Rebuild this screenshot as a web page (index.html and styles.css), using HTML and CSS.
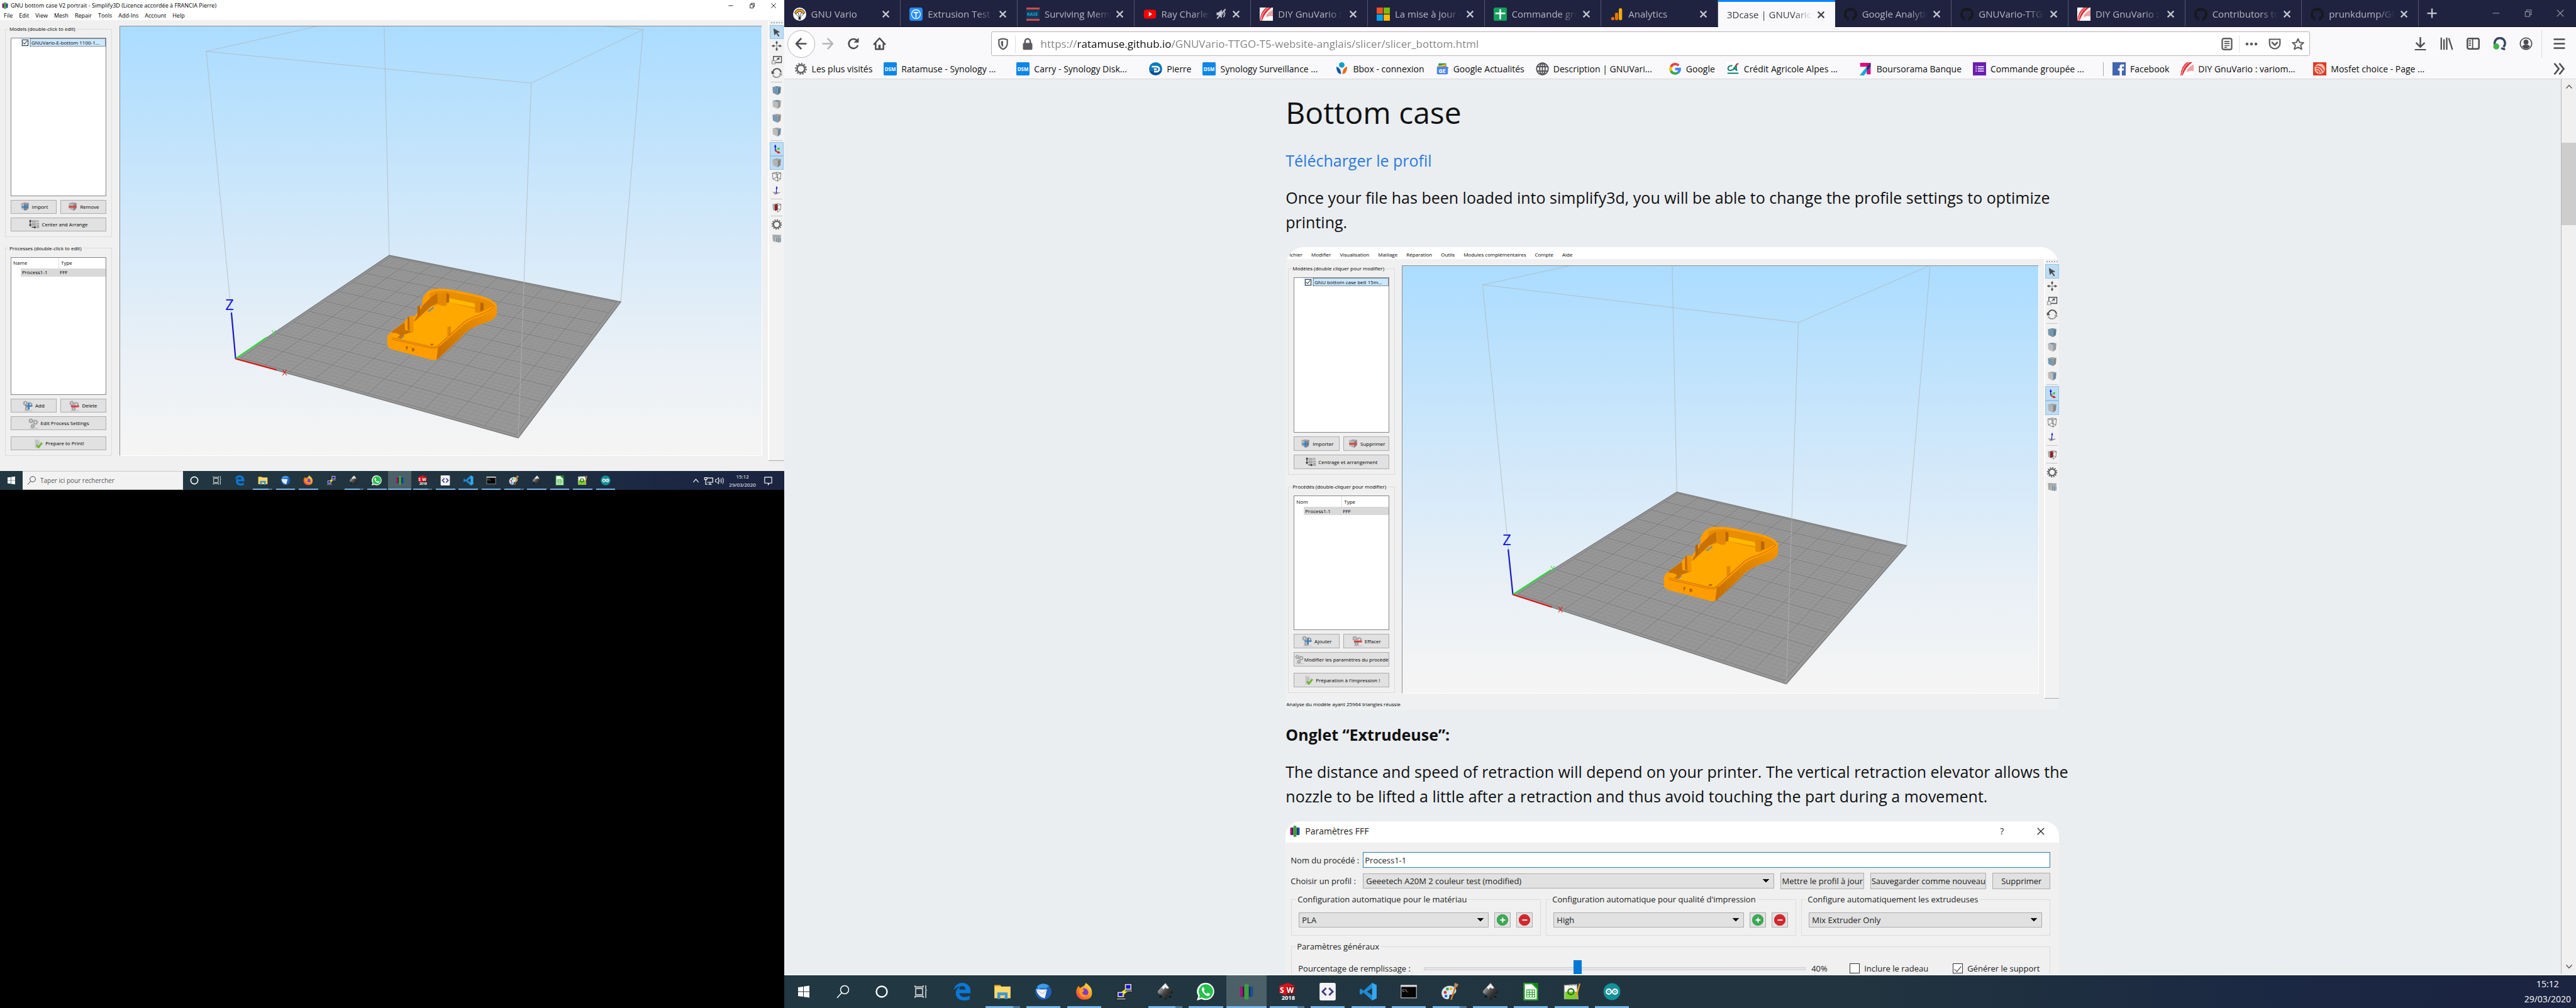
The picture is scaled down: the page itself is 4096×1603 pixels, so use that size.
FILE: index.html
```html
<!DOCTYPE html>
<html lang="fr">
<head>
<meta charset="utf-8">
<title>3Dcase | GNUVario</title>
<link rel="stylesheet" href="styles.css">
</head>
<body>
<svg class="sprite" aria-hidden="true">
  <defs>
    <linearGradient id="sky" x1="0" y1="0" x2="0" y2="1"><stop offset="0" stop-color="#aadcff"/><stop offset=".45" stop-color="#d1e8fa"/><stop offset=".75" stop-color="#e9f0f6"/><stop offset="1" stop-color="#f6f5f4"/></linearGradient>
    <linearGradient id="fire" x1="0" y1="1" x2=".8" y2="0"><stop offset="0" stop-color="#ff2f5a"/><stop offset=".5" stop-color="#ff8a16"/><stop offset="1" stop-color="#ffe14a"/></linearGradient>
    <linearGradient id="ink" x1="0" y1="0" x2="1" y2="1"><stop offset="0" stop-color="#f4f4f4"/><stop offset=".5" stop-color="#444"/><stop offset="1" stop-color="#000"/></linearGradient>
    <linearGradient id="wall" x1="0" y1="1" x2="1" y2="0"><stop offset="0" stop-color="#c46d00"/><stop offset=".6" stop-color="#e08600"/><stop offset="1" stop-color="#f79600"/></linearGradient>
    <g id="model">
      <path fill="#ff9d00" d="M-19 590Q-18 572 0 552L50 492 62 468Q75 448 88 462L103 430V395L112 391 120 397 122 350Q135 300 165 288 210 282 260 298L345 327Q410 352 420 390L419 445Q415 475 385 492 330 520 305 548 290 565 270 600L190 715Q178 735 160 730L0 665Q-19 652-19 640Z"/>
      <path fill="#ffa800" d="M22 575 60 540 145 400 185 385 225 372 330 410 345 438 380 420 290 490 182 638 165 645 30 600Z"/>
      <path fill="#e88e00" d="M150 318Q165 298 215 300L330 335Q405 362 410 392L360 430 330 410 225 372 185 385 150 400Z"/>
      <path fill="#ffb900" d="M228 345 330 378 334 404 228 372Z"/>
      <path fill="#c87100" d="M0 552 50 495 52 545 88 552 50 572 35 600 0 575ZM88 490 122 392 160 335 181 314 183 375 155 398 95 485Z"/>
      <path fill="#ffa200" d="M0 562Q25 560 32 580L20 590 0 584Z"/>
      <path fill="#8a8a8a" d="M142 425 166 398 168 408 146 434ZM36 590 48 574 48 584 40 598Z"/>
      <path fill="#e38800" d="M186 318 218 310V392L202 394 186 384ZM333 362H354V436H333ZM222 524 236 520V575L222 580Z"/>
      <path fill="#b96600" d="M218 312 229 322V370L218 376ZM354 372 367 376V418L354 430ZM102 395 112 391V450L102 458Z"/>
      <path fill="#ef9300" d="M62 465Q73 452 84 465L87 552Q72 560 62 540Z"/>
      <path fill="#c06b00" d="M62 465 69 460 71 550 62 540Z"/>
      <path fill="url(#wall)" d="M184 655 290 508Q310 482 345 466 405 428 420 394L419 445Q415 475 385 492 330 520 305 548 290 565 270 600L190 715Q186 726 178 729Z"/>
      <path fill="none" stroke="#c46e00" stroke-width="3" d="M0 592 160 650Q176 654 186 640L290 493Q310 470 345 454 402 420 412 392M0 602 158 658Q180 660 190 645"/>
      <path fill="#b56800" d="M55 648Q66 640 64 655L57 672ZM79 655Q93 655 90 674L80 678ZM153 630 168 630 164 640 155 640Z"/>
    </g>
  </defs>
  <symbol id="i-s3d" viewBox="0 0 24 24"><path fill="#a0187c" d="M3 6Q6 3 8 6V18Q6 21 3 18Z"/><path fill="#222" d="M7 5H9V19H7Z"/><path fill="#1c4c9c" d="M16 6Q19 3 21 6V18Q19 21 16 18Z"/><path fill="#18304a" d="M15 5H17V19H15Z"/><path fill="#3f9c45" d="M9 3Q12-1 15 3V21Q12 25 9 21Z"/></symbol>
  <symbol id="i-min" viewBox="0 0 24 24"><path d="M3 12H21" fill="none" stroke="currentColor" stroke-width="2"/></symbol>
  <symbol id="i-restore" viewBox="0 0 24 24"><path d="M4 8H16V21H4ZM8 8V3H20V16H16" fill="none" stroke="currentColor" stroke-width="2"/></symbol>
  <symbol id="i-x" viewBox="0 0 24 24"><path d="M3 3 21 21M21 3 3 21" fill="none" stroke="currentColor" stroke-width="2"/></symbol>
  <symbol id="i-close" viewBox="0 0 24 24"><path d="M3 3 21 21M21 3 3 21" fill="none" stroke="currentColor" stroke-width="4"/></symbol>
  <symbol id="i-plus" viewBox="0 0 24 24"><path d="M12 2V22M2 12H22" fill="none" stroke="currentColor" stroke-width="3"/></symbol>

  <symbol id="i-cube" viewBox="0 0 24 24"><path class="ct" d="M3 4.500 12 2.500 21 4 14 7Z"/><path class="cl" d="M3 4.500 14 7V21.500L4 17Z"/><path class="cr" d="M14 7 21 4 20 17 14 21.500Z"/></symbol>
  <symbol id="i-cubeplus" viewBox="0 0 24 24"><use href="#i-cube"/><path d="M12 6V20M5 13H20" stroke="#2f7cc0" stroke-width="3"/></symbol>
  <symbol id="i-cubeminus" viewBox="0 0 24 24"><use href="#i-cube"/><path d="M3 12.500H21" stroke="#e04040" stroke-width="4"/></symbol>
  <symbol id="i-arrange" viewBox="0 0 24 24"><path fill="#aaa" d="M6 3H16V8H6ZM17 3H22V7H17ZM6 9H16V16H6ZM17 9H23V13H17ZM17 14H23V21H17Z"/><path fill="none" stroke="#333" stroke-width="1.800" d="M3 4V15M1 6 3 3 5 6M1 13 3 16 5 13M6 19H14M12 17 15 19 12 21"/></symbol>
  <symbol id="i-gears" viewBox="0 0 24 24"><g fill="none" stroke="#9a9a9a"><circle cx="6" cy="6" r="3" stroke-width="2"/><circle cx="6" cy="6" r="4.500" stroke-width="2" stroke-dasharray="2 1.500"/><circle cx="16" cy="9" r="3.500" stroke-width="2"/><circle cx="16" cy="9" r="5" stroke-width="2" stroke-dasharray="2 1.900"/><circle cx="10" cy="18" r="2.500" stroke-width="2"/><circle cx="10" cy="18" r="4" stroke-width="2" stroke-dasharray="2 1.100"/></g><path fill="#bbb" d="M3 22H22V23.500H3Z"/></symbol>
  <symbol id="i-gearsplus" viewBox="0 0 24 24"><use href="#i-gears"/><path d="M14 5V20M6 12H22" stroke="#2f7cc0" stroke-width="3"/></symbol>
  <symbol id="i-gearsminus" viewBox="0 0 24 24"><use href="#i-gears"/><path d="M4 13H22" stroke="#dd3a40" stroke-width="4"/></symbol>
  <symbol id="i-doc" viewBox="0 0 24 24"><path fill="#d8d8d8" d="M4 2H14L18 7V22H4Z"/><path stroke="#999" fill="none" d="M6 5H12M6 8H15M6 11H15M6 14H13M6 17H11M6 20H15"/><path fill="none" stroke="#6cb52d" stroke-width="4" d="M9 15 13 20 21 10"/></symbol>

  <symbol id="t-arrow" viewBox="0 0 24 24"><path fill="#4a4d50" d="M5 4 19 12 13 13.500 18 20 15.500 21.500 11 15 7 19Z"/></symbol>
  <symbol id="t-move" viewBox="0 0 24 24"><path fill="#4a4d50" d="M12 1 15 6H13V9H11V6H9ZM12 23 9 18H11V15H13V18H15ZM1 12 6 9V11H9V13H6V15ZM23 12 18 15V13H15V11H18V9Z"/><path fill="#999" d="M10.500 10.500H13.500V13.500H10.500Z"/></symbol>
  <symbol id="t-scale" viewBox="0 0 24 24"><path fill="none" stroke="#4a4d50" stroke-width="1.800" d="M5 5H22V18H5Z"/><path fill="#4a4d50" d="M18 7 17 13 15 11 12 14 11 13 14 10 12 8.500Z"/><path fill="#e4e4e4" stroke="#999" stroke-width="1.500" d="M2 14H9V21H2Z"/></symbol>
  <symbol id="t-rotate" viewBox="0 0 24 24"><path fill="none" stroke="#4a4d50" stroke-width="2.600" d="M4 10A8.500 8.500 0 0 1 21 10"/><path fill="#4a4d50" d="M1 6 8 12 1 13Z"/><path fill="none" stroke="#999" stroke-width="2.600" d="M20 14A8.500 8.500 0 0 1 4 15"/><path fill="#999" d="M23 17 16 12 23 11Z"/></symbol>
  <symbol id="t-axes" viewBox="0 0 24 24"><path stroke="#1515d8" stroke-width="2" fill="none" d="M9 16V6"/><path fill="#1515d8" d="M9 2 11.500 8H6.500Z"/><path stroke="#2bc43c" stroke-width="2" fill="none" d="M9 16 16 11"/><path fill="#2bc43c" d="M19 9 17 14 13 10Z"/><path stroke="#d81515" stroke-width="2" fill="none" d="M9 16 15 19"/><path fill="#d81515" d="M20 21 13 21 16 16Z"/></symbol>
  <symbol id="t-wire" viewBox="0 0 24 24"><path fill="none" stroke="#555" d="M3 4.500 12 2.500 21 4 14 7ZM3 4.500 4 17 14 21.500V7M21 4 20 17 14 21.500M12 2.500V13L4 17M12 13 20 17"/></symbol>
  <symbol id="t-normal" viewBox="0 0 24 24"><path fill="#9a9a9a" d="M3 15 21 16 9 21Z"/><path stroke="#1515d8" stroke-width="1.500" d="M11 18 12 5"/><path fill="#1515d8" d="M12 2 14 8H10Z"/></symbol>
  <symbol id="t-cut" viewBox="0 0 24 24"><path fill="#a8a8a8" d="M3 5 12 3V20L4 17Z"/><path fill="#8f2020" d="M8 6 14 4V17L8 19Z"/><path fill="none" stroke="#666" d="M13 3.500 21 5 20 17 14 22V9L21 5M14 14 20 17"/></symbol>
  <symbol id="t-gear" viewBox="0 0 24 24"><circle cx="12" cy="12" r="7" fill="none" stroke="#666" stroke-width="3"/><circle cx="12" cy="12" r="9.500" fill="none" stroke="#666" stroke-width="3" stroke-dasharray="2.400 2.574"/></symbol>
  <symbol id="t-support" viewBox="0 0 24 24"><path fill="#a8a8a8" d="M3 4 22 5 20 10H10V20L4 18Z"/><path fill="#6d8797" d="M11 10H14V20H11ZM15 10H18V21H15ZM19 10H21V20H19Z"/></symbol>

  <symbol id="b-win" viewBox="0 0 24 24"><path fill="#fff" d="M3 5 11 4V11.500H3ZM12 3.800 21 2.500V11.500H12ZM3 12.500H11V20L3 19ZM12 12.500H21V21.500L12 20.200Z"/></symbol>
  <symbol id="b-search" viewBox="0 0 24 24"><circle cx="15" cy="9" r="6.500" fill="none" stroke="currentColor" stroke-width="1.500"/><path stroke="currentColor" stroke-width="1.500" d="M10.500 13.500 3 22"/></symbol>
  <symbol id="b-cortana" viewBox="0 0 24 24"><circle cx="12" cy="12" r="8.500" fill="none" stroke="#fff" stroke-width="2.400"/></symbol>
  <symbol id="b-view" viewBox="0 0 24 24"><path fill="none" stroke="#eee" stroke-width="1.400" d="M4 7H15V17H4ZM3 2V4.500H16V2M3 22V19.500H16V22M20 2V8M20 11V22M19 9.500H22"/></symbol>
  <symbol id="b-edge" viewBox="0 0 24 24"><path fill="#0b78d7" d="M.5 10C1.500 3.700 6.500 0 12 0c6.600 0 11.300 4.600 11.300 11.300v2.900H8.200c.2 3.600 3.200 5.200 7 5.200 2.600 0 5-.8 6.900-2v5C20 23.400 17.400 24 14.200 24 8.200 24 3.300 20.300 3.300 14.300c0-4.400 2.600-7.900 6.600-9.700C8.500 6 8.200 7.600 8.100 9.200h8.400c0-3.100-1.500-4.800-4.800-4.800-4.500 0-8.600 2.500-11.200 5.600z"/></symbol>
  <symbol id="b-folder" viewBox="0 0 24 24"><path fill="#f0b429" d="M1 3H9L11 6H1Z"/><path fill="#ffd868" d="M1 5H23V21H1Z"/><path fill="#3a96d8" d="M5 22V13H19V22H15V17H9V22Z"/></symbol>
  <symbol id="b-bird" viewBox="0 0 24 24"><circle cx="12" cy="12" r="11" fill="#1f5fb5"/><path fill="#3d9be8" d="M4 4Q12-2 20 4L15 8Q8 5 4 11Z"/><path fill="#f2f5fa" d="M2 9 17 9 14 21Q5 20 2 9Z"/><path fill="none" stroke="#b8c6d8" d="M2 9 11 15 17 9"/></symbol>
  <symbol id="b-fox" viewBox="0 0 24 24"><path fill="url(#fire)" d="M12 23C5 23 1 18 1 12.500 1 9 2.500 6 4.500 4L6 7 10 5Q13 4 14 0 20 4 22 9 25 23 12 23Z"/><circle cx="12" cy="13" r="5.500" fill="#7a3bd0"/><path fill="#ff9a1e" d="M6 8Q10 7 12 10L9 14Q12 18 17 16 12 22 7 17 4 13 6 8Z"/></symbol>
  <symbol id="b-putty" viewBox="0 0 24 24"><path fill="#d5d5d5" stroke="#222" d="M12 1H22V10H12ZM2 12H12V20H2ZM1 21H14V23H1ZM11 10H23V12H11Z"/><path fill="#1212d8" d="M14 3H20V8H14ZM4 14H10V18H4Z"/><path fill="#ffef1c" d="M15 7 7 13H11L8 18 16 12H12Z"/></symbol>
  <symbol id="b-ink" viewBox="0 0 24 24"><path fill="url(#ink)" d="M12 0 22 11Q24 16 16 15 18 18 14 19 16 22 12 24 8 22 10 20 6 17 8 16 0 16 2 11Z"/><path fill="#f2f2f2" d="M12 1 17 7 14 8 12 6 9 9 7 6Z"/><path fill="#111" d="M4 18H7V20H4ZM17 18H20V20H17Z"/></symbol>
  <symbol id="b-wa" viewBox="0 0 24 24"><path fill="#fff" d="M12 0A11.700 11.700 0 1 1 6.500 22L0 24 2 18A11.700 11.700 0 0 1 12 0Z"/><path fill="#27c14d" d="M12 2A9.800 9.800 0 1 1 7 20L3 21 4 17A9.800 9.800 0 0 1 12 2Z"/><path fill="#fff" d="M8 6Q6 8 7 10.500 10 17 15 18 18 17.500 18 15L15 13.500 13.500 15Q10.500 14 9.500 11L10.500 9.500 9.500 6.500Z"/></symbol>
  <symbol id="b-sw" viewBox="0 0 24 24"><path fill="#d8141c" d="M1 4 13 0 22 4V14L10 17 1 14Z"/><path fill="#8c0b10" d="M11 6 22 4V14L11 17Z"/><text x="2" y="14" font-size="10" font-weight="700" fill="#fff">S</text><text x="11" y="14" font-size="10" font-weight="700" fill="#fff">W</text><text x="4" y="23" font-size="8" font-weight="700" fill="#fff">2018</text></symbol>
  <symbol id="b-code" viewBox="0 0 24 24"><rect x="1" y="0" width="22" height="24" rx="2" fill="#f4f4f8"/><path fill="none" stroke="#3f3a86" stroke-width="2.400" d="M10 7 5 12 10 17M14 7 19 12 14 17"/></symbol>
  <symbol id="b-vs" viewBox="0 0 24 24"><path fill="#1f8ad2" d="M17 0 23 3V21L17 24 5 13 2 16 0 15V9L2 8 5 11ZM17 7 10 12 17 17Z"/><path fill="#35a8f0" d="M17 0 23 3V21L17 24Z"/></symbol>
  <symbol id="b-cmd" viewBox="0 0 24 24"><path fill="#050505" stroke="#bbb" d="M1.500 3.500H22.500V20.500H1.500Z"/><path fill="#ddd" d="M1 3H23V5.500H1Z"/><text x="3" y="12" font-size="5" fill="#fff">C:\_</text></symbol>
  <symbol id="b-paint" viewBox="0 0 24 24"><path fill="#d8e8f2" d="M12 4C5 4 1 9 1 14 1 20 6 23 10 22 13 21 10 17 13 16 18 16 21 14 21 10 20 6 17 4 12 4Z"/><circle cx="6" cy="13" r="2" fill="#e03030"/><circle cx="9" cy="8.500" r="2" fill="#39a845"/><circle cx="14" cy="8" r="2" fill="#eab82a"/><circle cx="7" cy="18" r="2" fill="#2a6fd0"/><path stroke="#cc7c2c" stroke-width="2.200" d="M14 23 20 5"/><path fill="#b98b5a" d="M18 5 19 0 24 2 22 6Z"/></symbol>
  <symbol id="b-calc" viewBox="0 0 24 24"><path fill="#fff" stroke="#2aa32a" stroke-width="2" d="M3 1H14L21 8V23H3Z"/><path fill="#19801c" d="M14 0H22V8Z"/><path fill="none" stroke="#2aa32a" d="M6.500 9.500H17.500V19.500H6.500ZM6 13H18M6 16H18M10 9V20M14 9V20"/></symbol>
  <symbol id="b-npp" viewBox="0 0 24 24"><path fill="#f6f6f0" stroke="#999" d="M2 3 19 2 21 22H2Z"/><path fill="#7ad02c" d="M3 12H20L21 22H3Z"/><path fill="none" stroke="#333" d="M3 3H18" stroke-dasharray="1 1"/><circle cx="11" cy="12" r="4" fill="none" stroke="#2c6e18" stroke-width="2"/><path stroke="#e09a2c" stroke-width="2" d="M23 1 18 20"/></symbol>
  <symbol id="b-ard" viewBox="0 0 24 24"><circle cx="12" cy="12" r="11.500" fill="#11929a"/><g fill="none" stroke="#fff" stroke-width="1.800"><circle cx="7.800" cy="12" r="3.300"/><circle cx="16.200" cy="12" r="3.300"/><path d="M6.500 12H9M15 12H17.500M16.200 10.700V13.300" stroke-width="1"/></g></symbol>
  <symbol id="b-net" viewBox="0 0 24 24"><path fill="none" stroke="#fff" stroke-width="1.800" d="M6 5H23V16H9M12 21H20M16 16V21M2 4H8V9H2ZM5 9V21H9"/></symbol>
  <symbol id="b-vol" viewBox="0 0 24 24"><path fill="none" stroke="#fff" stroke-width="1.600" d="M1 9H4L9 4V20L4 15H1ZM12 9Q14 12 12 15M15 6Q19 12 15 18M19 4Q24 12 19 20"/></symbol>
  <symbol id="b-note" viewBox="0 0 24 24"><path fill="none" stroke="#fff" stroke-width="1.800" d="M3 3H21V18H15L12 22V18H3Z"/></symbol>
  <symbol id="b-up" viewBox="0 0 24 24"><path fill="none" stroke="currentColor" stroke-width="2.600" d="M3 17 12 7 21 17"/></symbol>

  <symbol id="f-vario" viewBox="0 0 24 24"><circle cx="12" cy="12" r="12" fill="#fff"/><path fill="#e8a820" stroke="#111" d="M3 9Q5 3 12 3T21 9L19 12 15 8 12 7 9 8 5 12Z"/><path fill="none" stroke="#333" d="M5 12 11 18M19 12 13 18M9 9 12 18 15 9"/><path fill="#222" d="M10 17H14V22H10Z"/></symbol>
  <symbol id="f-thing" viewBox="0 0 24 24"><rect width="24" height="24" rx="4" fill="#248bfb"/><circle cx="12" cy="12" r="8" fill="none" stroke="#fff" stroke-width="1.500"/><path fill="#fff" d="M7.500 8H16.500V10H13V18H11V10H7.500Z"/></symbol>
  <symbol id="f-surv" viewBox="0 0 24 24"><path fill="#123a5c" d="M0 0H24V24H0Z"/><path fill="#dc4444" d="M0 0H24V3.500H0ZM0 20.500H24V24H0Z"/><text x="1" y="15" font-size="8" font-weight="700" fill="#20a4c4">KASE</text></symbol>
  <symbol id="f-yt" viewBox="0 0 24 24"><rect x="1" y="4" width="22" height="16" rx="4" fill="#f00"/><path fill="#fff" d="M10 8 16 12 10 16Z"/></symbol>
  <symbol id="f-diy" viewBox="0 0 24 24"><path fill="#fff" d="M0 0H24V24H0Z"/><path fill="#e03238" d="M0 24Q2 6 12 0H22Q10 8 4 24Z"/><path fill="none" stroke="#fff" d="M2 24Q4 8 16 0"/><path fill="#f2a0a2" d="M12 14Q16 8 24 4V16Q18 14 12 18Z"/></symbol>
  <symbol id="f-ms" viewBox="0 0 24 24"><path fill="#f25022" d="M0 0H11.300V11.300H0Z"/><path fill="#7fba00" d="M12.700 0H24V11.300H12.700Z"/><path fill="#00a4ef" d="M0 12.700H11.300V24H0Z"/><path fill="#ffb900" d="M12.700 12.700H24V24H12.700Z"/></symbol>
  <symbol id="f-sheet" viewBox="0 0 24 24"><rect width="24" height="24" rx="3" fill="#12a05c"/><path fill="#fff" d="M10.500 3H13.500V21H10.500ZM3 9H21V12H3Z"/></symbol>
  <symbol id="f-ana" viewBox="0 0 24 24"><rect x="16" y="1" width="6" height="22" rx="3" fill="#f9ab00"/><rect x="9" y="9" width="6" height="14" rx="3" fill="#e37400"/><circle cx="5" cy="20" r="3" fill="#e8710a"/></symbol>
  <symbol id="f-gh" viewBox="0 0 24 24"><path fill="#16181d" d="M12 .297c-6.630 0-12 5.373-12 12 0 5.303 3.438 9.800 8.205 11.385.6.113.82-.258.82-.577 0-.285-.01-1.040-.015-2.040-3.338.724-4.042-1.610-4.042-1.610C4.422 18.070 3.633 17.700 3.633 17.700c-1.087-.744.084-.729.084-.729 1.205.084 1.838 1.236 1.838 1.236 1.070 1.835 2.809 1.305 3.495.998.108-.776.417-1.305.76-1.605-2.665-.3-5.466-1.332-5.466-5.930 0-1.310.465-2.380 1.235-3.220-.135-.303-.54-1.523.105-3.176 0 0 1.005-.322 3.300 1.230.96-.267 1.980-.399 3-.405 1.020.006 2.040.138 3 .405 2.280-1.552 3.285-1.230 3.285-1.230.645 1.653.24 2.873.12 3.176.765.84 1.230 1.910 1.230 3.220 0 4.610-2.805 5.625-5.475 5.920.42.36.81 1.096.81 2.220 0 1.606-.015 2.896-.015 3.286 0 .315.21.69.825.57C20.565 22.092 24 17.592 24 12.297c0-6.627-5.373-12-12-12"/></symbol>
  <symbol id="f-mute" viewBox="0 0 24 24"><path fill="currentColor" d="M2 9H6L13 3V21L6 15H2ZM15 8Q18 12 15 16ZM17 4Q24 12 17 20L16 18Q21 12 16 6Z"/><path stroke="currentColor" stroke-width="2.500" d="M3 22 21 2"/></symbol>

  <symbol id="n-back" viewBox="0 0 24 24"><path fill="none" stroke="currentColor" stroke-width="3" stroke-linecap="round" stroke-linejoin="round" d="M21 12H4M12 3 3.500 12 12 21"/></symbol>
  <symbol id="n-fwd" viewBox="0 0 24 24"><path fill="none" stroke="currentColor" stroke-width="3" stroke-linecap="round" stroke-linejoin="round" d="M3 12H20M12 3 20.500 12 12 21"/></symbol>
  <symbol id="n-reload" viewBox="0 0 24 24"><path fill="none" stroke="currentColor" stroke-width="3" stroke-linecap="round" d="M19 16A8.500 8.500 0 1 1 18 6.500"/><path fill="currentColor" d="M21 1V10H12Z"/></symbol>
  <symbol id="n-home" viewBox="0 0 24 24"><path fill="none" stroke="currentColor" stroke-width="2.800" stroke-linejoin="round" stroke-linecap="round" d="M2 13 12 2 22 13M5 12V22H19V12"/><path fill="currentColor" d="M10 14H14V22H10Z"/></symbol>
  <symbol id="n-shield" viewBox="0 0 24 24"><path fill="none" stroke="currentColor" stroke-width="2.600" d="M4 4Q12 0 20 4V12Q19 19 12 22 5 19 4 12Z"/><path fill="currentColor" d="M12 6V18Q8 15 8 11V7Z"/></symbol>
  <symbol id="n-lock" viewBox="0 0 24 24"><rect x="3" y="10" width="18" height="13" rx="2" fill="currentColor"/><path fill="none" stroke="currentColor" stroke-width="3" d="M7 11V7A5 5 0 0 1 17 7V11"/></symbol>
  <symbol id="n-read" viewBox="0 0 24 24"><rect x="3" y="1.500" width="18" height="21" rx="3" fill="none" stroke="currentColor" stroke-width="2.800"/><path stroke="currentColor" stroke-width="2" d="M7 7H17M7 11H17M7 15H17M7 18.500H12"/></symbol>
  <symbol id="n-dots" viewBox="0 0 24 24"><g fill="currentColor"><circle cx="3.500" cy="12" r="2.800"/><circle cx="12" cy="12" r="2.800"/><circle cx="20.500" cy="12" r="2.800"/></g></symbol>
  <symbol id="n-pocket" viewBox="0 0 24 24"><path fill="none" stroke="currentColor" stroke-width="2.600" stroke-linejoin="round" d="M2 3H22V11A10 10 0 0 1 2 11Z"/><path fill="none" stroke="currentColor" stroke-width="3" stroke-linecap="round" d="M7 9 12 14 17 9"/></symbol>
  <symbol id="n-star" viewBox="0 0 24 24"><path fill="none" stroke="currentColor" stroke-width="2.400" stroke-linejoin="round" d="M12 2 15 9 22.500 9.500 17 14.500 19 22 12 18 5 22 7 14.500 1.500 9.500 9 9Z"/></symbol>
  <symbol id="n-down" viewBox="0 0 24 24"><path fill="none" stroke="currentColor" stroke-width="2.800" stroke-linecap="round" d="M12 1V17M5 11 12 18 19 11M3 23H21"/></symbol>
  <symbol id="n-lib" viewBox="0 0 24 24"><path fill="none" stroke="currentColor" stroke-width="2.600" stroke-linecap="round" d="M2 2V22M7 5V22M12 2V22M16 3 22 22"/></symbol>
  <symbol id="n-side" viewBox="0 0 24 24"><rect x="1.500" y="2.500" width="21" height="19" rx="3" fill="none" stroke="currentColor" stroke-width="2.800"/><path stroke="currentColor" stroke-width="2" d="M11 3V21M4 7H8M4 11H8M4 15H8"/></symbol>
  <symbol id="n-q" viewBox="0 0 24 24"><path fill="none" stroke="#3a4462" stroke-width="4" d="M5 17A9.500 9.500 0 1 1 19 18M15 20Q20 22 22 22"/><circle cx="6" cy="17" r="5.500" fill="#3fb54a"/></symbol>
  <symbol id="n-acc" viewBox="0 0 24 24"><circle cx="12" cy="12" r="10.500" fill="none" stroke="currentColor" stroke-width="2"/><circle cx="12" cy="9" r="4.500" fill="currentColor"/><path fill="currentColor" d="M4.500 17Q8 13 12 14 16 13 19.500 17 12 25 4.500 17Z"/></symbol>
  <symbol id="n-menu" viewBox="0 0 24 24"><path stroke="currentColor" stroke-width="3" stroke-linecap="round" d="M3 4H21M3 12H21M3 20H21"/></symbol>
  <symbol id="n-more" viewBox="0 0 24 24"><path fill="none" stroke="currentColor" stroke-width="3" d="M3 2 11 12 3 22M12 2 20 12 12 22"/></symbol>

  <symbol id="m-dsm" viewBox="0 0 24 24"><rect width="24" height="24" rx="2" fill="#0e86e8"/><text x="2" y="15.500" font-size="9" font-weight="700" fill="#fff">DSM</text></symbol>
  <symbol id="m-p" viewBox="0 0 24 24"><circle cx="12" cy="12" r="12" fill="#0d78b8"/><path fill="#0a4f94" d="M1 16A12 12 0 0 0 23 16Z"/><path fill="none" stroke="#fff" stroke-width="3" d="M5 8H14A4.500 4.500 0 0 1 14 17H9M9 12.500H14"/></symbol>
  <symbol id="m-bbox" viewBox="0 0 24 24"><circle cx="12" cy="5" r="5" fill="#10a0cc"/><path fill="#0b57a4" d="M2 8Q10 10 11 21 3 22 2 8Z"/><path fill="#ef6a14" d="M22 8Q14 10 13 21 21 22 22 8Z"/></symbol>
  <symbol id="m-news" viewBox="0 0 24 24"><path fill="#16965a" d="M5 2H19V10H5Z"/><path fill="#f2b51c" d="M2 7 18 3V12L3 14Z"/><path fill="#e2483c" d="M14 7 23 9 21 15H14Z"/><rect x="2" y="8" width="20" height="14" rx="2" fill="#4a87ee"/><text x="5" y="19" font-size="10" font-weight="700" fill="#fff">GE</text></symbol>
  <symbol id="m-globe" viewBox="0 0 24 24"><g fill="none" stroke="#56565a" stroke-width="2.200"><circle cx="12" cy="12" r="10.500"/><ellipse cx="12" cy="12" rx="5" ry="10.500"/><path d="M2 8H22M2 16H22M12 1V23"/></g></symbol>
  <symbol id="m-g" viewBox="0 0 24 24"><g fill="none" stroke-width="4.500"><path stroke="#e94335" d="M18.500 6A8.500 8.500 0 0 0 4.500 8.500"/><path stroke="#fbbc05" d="M4.500 8.300A8.500 8.500 0 0 0 4.500 15.700"/><path stroke="#34a853" d="M4.500 15.500A8.500 8.500 0 0 0 17.500 18.600"/><path stroke="#4285f4" d="M17.300 18.800A8.500 8.500 0 0 0 20.500 12.200H12"/></g></symbol>
  <symbol id="m-ca" viewBox="0 0 24 24"><path fill="#fff" d="M0 0H24V24H0Z"/><path fill="none" stroke="#0c7a70" stroke-width="2.200" d="M11 6Q3 6 3 12 4 17 13 13L18 5 18 15M13 10 20 15M2 20H22"/><path stroke="#d82c34" stroke-width="2" d="M17 6 22 2"/></symbol>
  <symbol id="m-bourso" viewBox="0 0 24 24"><path fill="#e5007e" d="M2 1H21V22H14V8H2Z"/><path fill="#18a8e0" d="M14 8H21L9 24H1Z"/><path fill="#2b2f78" d="M14 8 21 1V8L14 16Z"/></symbol>
  <symbol id="m-form" viewBox="0 0 24 24"><path fill="#6a1fb0" d="M0 0H24V24H0Z"/><path stroke="#fff" stroke-width="1.500" d="M5 8H7M9 8H20M5 12H7M9 12H20M5 16H7M9 16H20"/></symbol>
  <symbol id="m-fb" viewBox="0 0 24 24"><path fill="#4166b0" d="M0 0H24V24H0Z"/><path fill="#fff" d="M13 24V15H10V11H13V8Q13 4 17 4H21V8H18Q17 8 17 9V11H21L20 15H17V24Z"/></symbol>
  <symbol id="m-mos" viewBox="0 0 24 24"><path fill="#dc3a22" d="M0 0H24V24H0Z"/><circle cx="12" cy="12" r="9.500" fill="#f6c0b6"/><g fill="none" stroke="#dc3a22" stroke-width="2"><path d="M5 8Q14 5 19 16M5 12Q12 9 15 19M6 16Q10 14 11 20"/></g></symbol>
</svg>

<div class="desk">
  <section class="screen small" aria-label="Simplify3D">
    <div class="slicer main-app">
      <header class="titlebar"><svg class="ico"><use href="#i-s3d"/></svg><span class="title">GNU bottom case V2 portrait - Simplify3D (Licence accordée à FRANCIA Pierre)</span>
        <div class="winbtns"><button aria-label="Réduire"><svg><use href="#i-min"/></svg></button><button aria-label="Restaurer"><svg><use href="#i-restore"/></svg></button><button aria-label="Fermer"><svg><use href="#i-x"/></svg></button></div>
      </header>
      <nav class="menubar"><a href="#">File</a><a href="#">Edit</a><a href="#">View</a><a href="#">Mesh</a><a href="#">Repair</a><a href="#">Tools</a><a href="#">Add-Ins</a><a href="#">Account</a><a href="#">Help</a></nav>
      <div class="work">
        <div class="sidebar">
          <fieldset><legend>Models (double-click to edit)</legend>
            <div class="list"><label class="item"><input type="checkbox" checked><span>GNUVario-E-bottom 1100-1...</span></label></div>
            <div class="pair"><button><svg class="grey"><use href="#i-cubeplus"/></svg>Import</button><button><svg class="grey"><use href="#i-cubeminus"/></svg>Remove</button></div>
            <button><svg><use href="#i-arrange"/></svg>Center and Arrange</button>
          </fieldset>
          <fieldset><legend>Processes (double-click to edit)</legend>
            <div class="list"><table><thead><tr><th>Name</th><th>Type</th></tr></thead><tbody><tr><td>Process1-1</td><td>FFF</td></tr></tbody></table></div>
            <div class="pair"><button><svg><use href="#i-gearsplus"/></svg>Add</button><button><svg><use href="#i-gearsminus"/></svg>Delete</button></div>
            <button><svg><use href="#i-gears"/></svg>Edit Process Settings</button>
            <button class="last"><svg><use href="#i-doc"/></svg>Prepare to Print!</button>
          </fieldset>
        </div>
        <svg class="viewport" viewBox="256 55 1377 922" preserveAspectRatio="xMidYMid slice">
          <rect x="250" y="50" width="1390" height="935" fill="url(#sky)"/>
          <g class="wire"><path d="M683 54 441 109 1139 177 1379 62 1285 54M823 54 834 547M441 109 504 769M1379 62 1331 647"/></g>
          <g class="plate" data-corners="504,769 1111,939 1331,647 834,547"></g>
          <use href="#model" transform="translate(840 520) scale(.5357 .3444)"/>
          <path class="wire" d="M1139 177 1111 939"/>
          <path class="axis z" d="M504 769 495 670"/><path class="axis y" d="M504 769 571 723"/><path class="axis x" d="M504 769 592 793"/>
          <text class="z" x="482" y="664">Z</text><text class="y" x="581" y="720">Y</text><text class="x" x="604" y="805">X</text>
        </svg>
        <div class="tools">
          <span class="grip"></span>
          <button class="on" aria-label="Select"><svg><use href="#t-arrow"/></svg></button><button aria-label="Move"><svg><use href="#t-move"/></svg></button><button aria-label="Scale"><svg><use href="#t-scale"/></svg></button><button aria-label="Rotate"><svg><use href="#t-rotate"/></svg></button><hr>
          <button aria-label="Default view"><svg class="c-all"><use href="#i-cube"/></svg></button><button aria-label="Top view"><svg class="c-top"><use href="#i-cube"/></svg></button><button aria-label="Front view"><svg class="c-front"><use href="#i-cube"/></svg></button><button aria-label="Side view"><svg class="c-side"><use href="#i-cube"/></svg></button><hr>
          <button class="on" aria-label="Axes"><svg><use href="#t-axes"/></svg></button><button class="on" aria-label="Solid"><svg class="grey"><use href="#i-cube"/></svg></button><button aria-label="Wireframe"><svg><use href="#t-wire"/></svg></button><button aria-label="Normals"><svg><use href="#t-normal"/></svg></button><hr>
          <button aria-label="Cross section"><svg><use href="#t-cut"/></svg></button><hr>
          <button aria-label="Machine"><svg><use href="#t-gear"/></svg></button><button aria-label="Supports"><svg><use href="#t-support"/></svg></button>
        </div>
      </div>
      <div class="status"></div>
    </div>
    <footer class="taskbar">
      <button class="sys" aria-label="Démarrer"><svg><use href="#b-win"/></svg></button>
      <label class="search"><svg><use href="#b-search"/></svg><input type="text" placeholder="Taper ici pour rechercher" aria-label="Rechercher"></label>
      <button class="sys" aria-label="Cortana"><svg><use href="#b-cortana"/></svg></button><button class="sys" aria-label="Affichage des tâches"><svg><use href="#b-view"/></svg></button>
      <div class="apps">
        <button aria-label="Edge"><svg><use href="#b-edge"/></svg></button><button class="run multi" aria-label="Explorateur"><svg><use href="#b-folder"/></svg></button><button class="run" aria-label="Thunderbird"><svg><use href="#b-bird"/></svg></button><button class="run" aria-label="Firefox"><svg><use href="#b-fox"/></svg></button><button aria-label="PuTTY"><svg><use href="#b-putty"/></svg></button><button class="run multi" aria-label="Inkscape"><svg><use href="#b-ink"/></svg></button><button class="run" aria-label="WhatsApp"><svg><use href="#b-wa"/></svg></button><button class="run active" aria-label="Simplify3D"><svg><use href="#i-s3d"/></svg></button><button class="run multi" aria-label="SolidWorks"><svg><use href="#b-sw"/></svg></button><button class="run" aria-label="Code"><svg><use href="#b-code"/></svg></button><button class="run" aria-label="VS Code"><svg><use href="#b-vs"/></svg></button><button class="run" aria-label="Invite de commandes"><svg><use href="#b-cmd"/></svg></button><button class="run multi" aria-label="Paint"><svg><use href="#b-paint"/></svg></button><button class="run" aria-label="Inkscape"><svg><use href="#b-ink"/></svg></button><button class="run" aria-label="Calc"><svg><use href="#b-calc"/></svg></button><button class="run" aria-label="Notepad++"><svg><use href="#b-npp"/></svg></button><button class="run" aria-label="Arduino"><svg><use href="#b-ard"/></svg></button>
      </div>
      <div class="tray"><svg class="chev"><use href="#b-up"/></svg><svg><use href="#b-net"/></svg><svg><use href="#b-vol"/></svg><div class="clock"><span>15:12</span><span>29/03/2020</span></div><svg class="note"><use href="#b-note"/></svg></div>
    </footer>
  </section>

  <section class="screen large" aria-label="Firefox">
    <header class="tabstrip">
      <div class="tabs">
        <div class="tab"><svg><use href="#f-vario"/></svg><span>GNU Vario</span><button aria-label="Fermer"><svg><use href="#i-close"/></svg></button></div>
        <div class="tab"><svg><use href="#f-thing"/></svg><span>Extrusion Test F</span><button aria-label="Fermer"><svg><use href="#i-close"/></svg></button></div>
        <div class="tab"><svg><use href="#f-surv"/></svg><span>Surviving Memb</span><button aria-label="Fermer"><svg><use href="#i-close"/></svg></button></div>
        <div class="tab"><svg><use href="#f-yt"/></svg><span>Ray Charles</span><svg class="mute"><use href="#f-mute"/></svg><button aria-label="Fermer"><svg><use href="#i-close"/></svg></button></div>
        <div class="tab"><svg><use href="#f-diy"/></svg><span>DIY GnuVario : v</span><button aria-label="Fermer"><svg><use href="#i-close"/></svg></button></div>
        <div class="tab"><svg><use href="#f-ms"/></svg><span>La mise à jour de</span><button aria-label="Fermer"><svg><use href="#i-close"/></svg></button></div>
        <div class="tab"><svg><use href="#f-sheet"/></svg><span>Commande gro</span><button aria-label="Fermer"><svg><use href="#i-close"/></svg></button></div>
        <div class="tab"><svg><use href="#f-ana"/></svg><span>Analytics</span><button aria-label="Fermer"><svg><use href="#i-close"/></svg></button></div>
        <div class="tab current"><span>3Dcase | GNUVario-</span><button aria-label="Fermer"><svg><use href="#i-close"/></svg></button></div>
        <div class="tab"><svg><use href="#f-gh"/></svg><span>Google Analytic</span><button aria-label="Fermer"><svg><use href="#i-close"/></svg></button></div>
        <div class="tab"><svg><use href="#f-gh"/></svg><span>GNUVario-TTGO</span><button aria-label="Fermer"><svg><use href="#i-close"/></svg></button></div>
        <div class="tab"><svg><use href="#f-diy"/></svg><span>DIY GnuVario : v</span><button aria-label="Fermer"><svg><use href="#i-close"/></svg></button></div>
        <div class="tab"><svg><use href="#f-gh"/></svg><span>Contributors to</span><button aria-label="Fermer"><svg><use href="#i-close"/></svg></button></div>
        <div class="tab"><svg><use href="#f-gh"/></svg><span>prunkdump/GN</span><button aria-label="Fermer"><svg><use href="#i-close"/></svg></button></div>
      </div>
      <button class="newtab" aria-label="Nouvel onglet"><svg><use href="#i-plus"/></svg></button>
      <div class="winbtns"><button aria-label="Réduire"><svg><use href="#i-min"/></svg></button><button aria-label="Restaurer"><svg><use href="#i-restore"/></svg></button><button aria-label="Fermer"><svg><use href="#i-x"/></svg></button></div>
    </header>
    <div class="navbar">
      <button class="back" aria-label="Précédent"><svg><use href="#n-back"/></svg></button>
      <button class="nav dim" aria-label="Suivant"><svg><use href="#n-fwd"/></svg></button><button class="nav" aria-label="Actualiser"><svg><use href="#n-reload"/></svg></button><button class="nav" aria-label="Accueil"><svg><use href="#n-home"/></svg></button>
      <div class="urlbar">
        <svg><use href="#n-shield"/></svg><i></i><svg><use href="#n-lock"/></svg>
        <input type="text" aria-label="Adresse" value="https://ratamuse.github.io/GNUVario-TTGO-T5-website-anglais/slicer/slicer_bottom.html">
        <svg><use href="#n-read"/></svg><i></i><svg><use href="#n-dots"/></svg><svg><use href="#n-pocket"/></svg><svg><use href="#n-star"/></svg>
      </div>
      <div class="extras"><button aria-label="Téléchargements"><svg><use href="#n-down"/></svg></button><button aria-label="Bibliothèque"><svg><use href="#n-lib"/></svg></button><button aria-label="Barre latérale"><svg><use href="#n-side"/></svg></button><button aria-label="Qwant"><svg><use href="#n-q"/></svg></button><button aria-label="Compte"><svg><use href="#n-acc"/></svg></button></div>
      <button class="burger" aria-label="Menu"><svg><use href="#n-menu"/></svg></button>
    </div>
    <nav class="bookmarks">
      <a href="#"><svg><use href="#t-gear"/></svg>Les plus visités</a>
      <a href="#" class="wide"><svg><use href="#m-dsm"/></svg>Ratamuse - Synology ...</a>
      <a href="#" class="wide"><svg><use href="#m-dsm"/></svg>Carry - Synology Disk...</a>
      <a href="#"><svg><use href="#m-p"/></svg>Pierre</a>
      <a href="#" class="wide"><svg><use href="#m-dsm"/></svg>Synology Surveillance ...</a>
      <a href="#"><svg><use href="#m-bbox"/></svg>Bbox - connexion</a>
      <a href="#"><svg><use href="#m-news"/></svg>Google Actualités</a>
      <a href="#" class="wide"><svg><use href="#m-globe"/></svg>Description | GNUVari...</a>
      <a href="#"><svg><use href="#m-g"/></svg>Google</a>
      <a href="#" class="wide"><svg><use href="#m-ca"/></svg>Crédit Agricole Alpes ...</a>
      <a href="#"><svg><use href="#m-bourso"/></svg>Boursorama Banque</a>
      <a href="#" class="wide"><svg><use href="#m-form"/></svg>Commande groupée ...</a>
      <i></i>
      <a href="#"><svg><use href="#m-fb"/></svg>Facebook</a>
      <a href="#" class="wide"><svg><use href="#f-diy"/></svg>DIY GnuVario : variom...</a>
      <a href="#" class="wide"><svg><use href="#m-mos"/></svg>Mosfet choice - Page ...</a>
      <button aria-label="Plus de marque-pages"><svg><use href="#n-more"/></svg></button>
    </nav>
    <div class="page">
      <main class="article">
        <h1>Bottom case</h1>
        <p><a href="#">Télécharger le profil</a></p>
        <p>Once your file has been loaded into simplify3d, you will be able to change the profile settings to optimize<br>printing.</p>
        <div class="slicer shot">
          <nav class="menubar"><a href="#">Fichier</a><a href="#">Modifier</a><a href="#">Visualisation</a><a href="#">Maillage</a><a href="#">Réparation</a><a href="#">Outils</a><a href="#">Modules complémentaires</a><a href="#">Compte</a><a href="#">Aide</a></nav>
          <div class="work">
            <div class="sidebar">
              <fieldset><legend>Modèles (double cliquer pour modifier)</legend>
                <div class="list"><label class="item"><input type="checkbox" checked><span>GNU bottom case belt 15m...</span></label></div>
                <div class="pair"><button><svg class="grey"><use href="#i-cubeplus"/></svg>Importer</button><button><svg class="grey"><use href="#i-cubeminus"/></svg>Supprimer</button></div>
                <button><svg><use href="#i-arrange"/></svg>Centrage et arrangement</button>
              </fieldset>
              <fieldset><legend>Procédés (double-cliquer pour modifier)</legend>
                <div class="list"><table><thead><tr><th>Nom</th><th>Type</th></tr></thead><tbody><tr><td>Process1-1</td><td>FFF</td></tr></tbody></table></div>
                <div class="pair"><button><svg><use href="#i-gearsplus"/></svg>Ajouter</button><button><svg><use href="#i-gearsminus"/></svg>Effacer</button></div>
                <button class="tight"><svg><use href="#i-gears"/></svg>Modifier les paramètres du procédé</button>
                <button class="last"><svg><use href="#i-doc"/></svg>Préparation à l'impression !</button>
              </fieldset>
            </div>
            <svg class="viewport" viewBox="3006 566 1365 918" preserveAspectRatio="xMidYMid slice">
              <rect x="3000" y="560" width="1380" height="930" fill="url(#sky)"/>
              <g class="wire"><path d="M3370 565 3178 607 3856 688 4137 566M3585 565 3595 1052M3178 607 3243 1272M4139 565 4088 1167"/></g>
              <g class="plate" data-corners="3243,1272 3830,1464 4088,1167 3595,1052"></g>
              <use href="#model" transform="translate(3578 1024) scale(.5584 .3586)"/>
              <path class="wire" d="M3856 688 3830 1464"/>
              <path class="axis z" d="M3243 1272 3233 1175"/><path class="axis y" d="M3243 1272 3325 1219"/><path class="axis x" d="M3243 1272 3327 1299"/>
              <text class="z" x="3221" y="1166">Z</text><text class="y" x="3324" y="1223">Y</text><text class="x" x="3340" y="1311">X</text>
            </svg>
            <div class="tools">
              <span class="grip"></span>
              <button class="on" aria-label="Sélection"><svg><use href="#t-arrow"/></svg></button><button aria-label="Déplacer"><svg><use href="#t-move"/></svg></button><button aria-label="Échelle"><svg><use href="#t-scale"/></svg></button><button aria-label="Rotation"><svg><use href="#t-rotate"/></svg></button><hr>
              <button aria-label="Vue par défaut"><svg class="c-all"><use href="#i-cube"/></svg></button><button aria-label="Dessus"><svg class="c-top"><use href="#i-cube"/></svg></button><button aria-label="Face"><svg class="c-front"><use href="#i-cube"/></svg></button><button aria-label="Côté"><svg class="c-side"><use href="#i-cube"/></svg></button><hr>
              <button class="on" aria-label="Axes"><svg><use href="#t-axes"/></svg></button><button class="on" aria-label="Solide"><svg class="grey"><use href="#i-cube"/></svg></button><button aria-label="Filaire"><svg><use href="#t-wire"/></svg></button><button aria-label="Normales"><svg><use href="#t-normal"/></svg></button><hr>
              <button aria-label="Coupe"><svg><use href="#t-cut"/></svg></button><hr>
              <button aria-label="Machine"><svg><use href="#t-gear"/></svg></button><button aria-label="Supports"><svg><use href="#t-support"/></svg></button>
            </div>
          </div>
          <div class="status">Analyse du modèle ayant 25964 triangles réussie</div>
        </div>
        <p><strong>Onglet “Extrudeuse”:</strong></p>
        <p>The distance and speed of retraction will depend on your printer. The vertical retraction elevator allows the<br>nozzle to be lifted a little after a retraction and thus avoid touching the part during a movement.</p>
        <form class="fff">
          <header><svg><use href="#i-s3d"/></svg><span>Paramètres FFF</span><button type="button" class="help">?</button><button type="button" aria-label="Fermer"><svg><use href="#i-x"/></svg></button></header>
          <div class="fields">
            <div class="row"><label for="pname">Nom du procédé :</label><input id="pname" type="text" value="Process1-1" autofocus></div>
            <div class="row"><label for="prof">Choisir un profil :</label><select id="prof"><option>Geeetech A20M 2 couleur test (modified)</option></select><button type="button" class="b1">Mettre le profil à jour</button><button type="button" class="b2">Sauvegarder comme nouveau</button><button type="button" class="b3">Supprimer</button></div>
            <div class="groups">
              <fieldset><legend>Configuration automatique pour le matériau</legend><select aria-label="Matériau"><option>PLA</option></select><button type="button" class="sq add">+</button><button type="button" class="sq del">−</button></fieldset>
              <fieldset><legend>Configuration automatique pour qualité d'impression</legend><select aria-label="Qualité"><option>High</option></select><button type="button" class="sq add">+</button><button type="button" class="sq del">−</button></fieldset>
              <fieldset><legend>Configure automatiquement les extrudeuses</legend><select aria-label="Extrudeuses"><option>Mix Extruder Only</option></select></fieldset>
            </div>
            <fieldset class="general"><legend>Paramètres généraux</legend>
              <label for="fill">Pourcentage de remplissage :</label><input id="fill" type="range" min="0" max="100" value="40"><output for="fill">40%</output>
              <label class="chk"><input type="checkbox">Inclure le radeau</label><label class="chk"><input type="checkbox" checked>Générer le support</label>
            </fieldset>
          </div>
        </form>
      </main>
      <div class="scroll"><svg><use href="#b-up"/></svg><span></span><svg class="flip"><use href="#b-up"/></svg></div>
    </div>
    <footer class="taskbar">
      <button class="sys" aria-label="Démarrer"><svg><use href="#b-win"/></svg></button><button class="sys" aria-label="Rechercher"><svg><use href="#b-search"/></svg></button><button class="sys" aria-label="Cortana"><svg><use href="#b-cortana"/></svg></button><button class="sys" aria-label="Affichage des tâches"><svg><use href="#b-view"/></svg></button>
      <div class="apps">
        <button aria-label="Edge"><svg><use href="#b-edge"/></svg></button><button class="run multi" aria-label="Explorateur"><svg><use href="#b-folder"/></svg></button><button class="run" aria-label="Thunderbird"><svg><use href="#b-bird"/></svg></button><button class="run" aria-label="Firefox"><svg><use href="#b-fox"/></svg></button><button aria-label="PuTTY"><svg><use href="#b-putty"/></svg></button><button class="run multi" aria-label="Inkscape"><svg><use href="#b-ink"/></svg></button><button class="run" aria-label="WhatsApp"><svg><use href="#b-wa"/></svg></button><button class="run active" aria-label="Simplify3D"><svg><use href="#i-s3d"/></svg></button><button class="run multi" aria-label="SolidWorks"><svg><use href="#b-sw"/></svg></button><button class="run" aria-label="Code"><svg><use href="#b-code"/></svg></button><button class="run" aria-label="VS Code"><svg><use href="#b-vs"/></svg></button><button class="run" aria-label="Invite de commandes"><svg><use href="#b-cmd"/></svg></button><button class="run multi" aria-label="Paint"><svg><use href="#b-paint"/></svg></button><button class="run" aria-label="Inkscape"><svg><use href="#b-ink"/></svg></button><button class="run" aria-label="Calc"><svg><use href="#b-calc"/></svg></button><button class="run" aria-label="Notepad++"><svg><use href="#b-npp"/></svg></button><button class="run" aria-label="Arduino"><svg><use href="#b-ard"/></svg></button>
      </div>
      <div class="tray"><div class="clock"><span>15:12</span><span>29/03/2020</span></div></div>
    </footer>
  </section>
</div>
<script src="scene.js"></script>
</body>
</html>
```
FILE: styles.css
```css
* { box-sizing: border-box; }
body { margin: 0; background: #000; font-family: "Open Sans", "Noto Sans", sans-serif; color: #111; }
button, input, select { font: inherit; color: inherit; margin: 0; padding: 0; border: 0; background: none; border-radius: 0; }
button { display: flex; align-items: center; justify-content: center; white-space: nowrap; }
a { color: inherit; text-decoration: none; }
svg { display: block; flex: none; }
.sprite { position: absolute; width: 0; height: 0; visibility: hidden; }

.desk { display: grid; grid-template-columns: minmax(0, 7fr) minmax(0, 16fr); height: 100vh; }
.screen { display: flex; flex-direction: column; min-height: 0; }
.small { height: calc(100vh * 35 / 72); }
.large { height: 100vh; background: #eaeef1; }

/* 3D slicer window */
.slicer { display: flex; flex-direction: column; background: #f0f0f0; font-size: 8px; line-height: 12px; color: #000; }
.main-app { flex: 1; min-height: 0; }
.titlebar { display: flex; align-items: center; height: 18px; background: #fff; font-size: 9px; padding-left: 2px; gap: 3px; }
.titlebar .ico { width: 12px; height: 14px; }
.titlebar .title { flex: 1; }
.winbtns { display: flex; }
.titlebar .winbtns button { width: 34px; height: 16px; }
.titlebar .winbtns svg { width: 10px; height: 10px; }
.menubar { display: flex; gap: 14px; align-items: center; background: #fff; }
.main-app .menubar { height: 14px; font-size: 9px; padding-left: 6px; gap: 10px; }
.work { flex: 1; display: flex; min-height: 0; }
.sidebar { display: flex; flex-direction: column; gap: 12px; width: 190px; padding: 8px 12px 8px 8px; }
.sidebar fieldset { flex: 1 1 0; display: flex; flex-direction: column; gap: 6px; margin: 0; padding: 8px; border: 1px solid #dcdcdc; min-width: 0; min-height: 0; }
legend { padding: 0 2px; }
.sidebar legend { margin-left: -4px; line-height: 12px; }
.list { flex: 1; background: #fff; border: 1px solid #83868b; overflow: hidden; min-height: 0; }
.item { display: flex; align-items: center; margin-left: 15px; height: 13px; background: #cce8ff; padding-left: 2px; gap: 3px; }
.item span { flex: 1; border: 1px dotted #333; line-height: 11px; padding-left: 1px; white-space: nowrap; }
input[type="checkbox"] { appearance: none; display: grid; place-items: center; width: 10px; height: 10px; border: 1px solid #333; background: #fff; flex: none; }
input[type="checkbox"]:checked::after { content: ""; width: 3px; height: 6px; border: solid #333; border-width: 0 1px 1px 0; transform: translateY(-1px) rotate(40deg); }
.list table { width: 100%; border-collapse: separate; border-spacing: 0; table-layout: fixed; }
.list th { text-align: left; font-weight: 400; padding: 0 0 0 3px; height: 17px; }
.list th + th { border-left: 1px solid #e0e0e0; }
.list td { padding: 0 0 0 2px; height: 13px; background: #d9d9d9; }
.list td:first-child { border-left: 15px solid #fff; }
.pair { display: grid; grid-template-columns: 1fr 1fr; gap: 6px; }
.sidebar button { height: 22px; border: 1px solid #adadad; background: #e1e1e1; gap: 3px; }
.sidebar button svg { width: 17px; height: 17px; }
.sidebar .last { margin-top: 4px; }
.sidebar .tight { gap: 0; }
.sidebar .tight svg { width: 15px; }
.viewport { flex: 1; min-width: 0; width: auto; height: auto; margin: 9px 9px 8px 0; border: 1px solid #fff; border-top-color: #8a8f94; border-left-color: #8a8f94; }
.tools { width: 26px; background: #f2f2f2; border-left: 2px solid #fff; border-bottom: 1px solid #aaa; display: flex; flex-direction: column; align-items: center; }
.grip { width: 18px; height: 2px; margin: 3px 0; border-top: 2px dotted #aaa; }
.tools button { width: 22px; height: 22px; flex: none; }
.tools button.on { background: #bedcf3; border: 1px solid #90c5ec; }
.tools button svg { width: 18px; height: 18px; }
.tools hr { width: 18px; height: 1px; margin: 2px 0; border: 0; background: #c4c4c4; flex: none; }
.status { height: 16px; }

.ct { fill: var(--t, #a0a0a0); } .cl { fill: var(--l, #b4b4b4); } .cr { fill: var(--r, #868686); }
.c-all { --t: #5f8cab; --l: #7496ad; --r: #5a7c92; }
.c-top { --t: #6690b0; --l: #bcbcbc; --r: #9a9a9a; }
.c-front { --t: #a0a0a0; --l: #7399b3; --r: #8a8a8a; }
.c-side { --t: #a0a0a0; --l: #bcbcbc; --r: #6a8ba3; }

.wire { fill: none; stroke: #b0b4b6; stroke-width: 1; }
.plate .bed { fill: #989898; stroke: #7c7c7c; stroke-width: 2; }
.plate .minor { stroke: #8e8e8e; stroke-width: 1; fill: none; }
.plate .major { stroke: #747474; stroke-width: 1; fill: none; }
.axis { fill: none; stroke-width: 3; }
.axis.z { stroke: #1c1cc8; } .axis.y { stroke: #2be03c; } .axis.x { stroke: #e01414; }
text.z { fill: #1010d8; font-size: 32px; } text.y { fill: #2be03c; font-size: 16px; } text.x { fill: #e01414; font-size: 18px; }

.shot { height: 736px; border-radius: 30px 30px 14px 14px; overflow: hidden; }
.shot .menubar { height: 19px; padding: 4px 0 0 2px; flex: none; }
.shot .sidebar { width: 185px; padding: 9px 11px 9px 4px; gap: 13px; }
.shot .viewport { margin: 10px 8px 8px 0; }
.shot .tools { width: 24px; }
.shot .sidebar button { height: 23px; }
.shot .tools button { height: 23px; }
.shot .status { height: 18px; background: #eef0f1; padding: 3px 0 0 1px; }

/* taskbar */
.taskbar { display: flex; align-items: stretch; background: linear-gradient(90deg, #213842 0%, #21343f 60%, #1b2743 85%, #1b2440 100%); color: #fff; flex: none; }
.small .taskbar { height: 30px; font-size: 8px; line-height: 13px; }
.large .taskbar { height: 54px; border-top: 2px solid #fff; font-size: 14px; line-height: 24px; }
.small .sys { width: 36px; }
.large .sys { width: 62px; }
.small .taskbar svg { width: 16px; height: 16px; }
.large .taskbar svg { width: 28px; height: 28px; }
.large .sys svg { width: 24px; height: 24px; }
.search { display: flex; align-items: center; width: 255px; gap: 6px; padding-left: 6px; background: #f2f2f2; border: 1px solid #ccc; border-width: 1px 0; font-size: 10px; color: #444; }
.search input { flex: 1; min-width: 0; }
.search input::placeholder { color: #555; opacity: 1; }
.apps { display: grid; grid-auto-flow: column; grid-auto-columns: 1fr; }
.small .apps { width: 618px; }
.large .apps { width: 1098px; margin-left: 3px; }
.apps button { position: relative; }
.apps .active { background: #4c6068; }
.apps .run::after { content: ""; position: absolute; left: 8%; right: 8%; bottom: 0; height: 2px; background: #78b6e8; }
.apps .multi::after { background: linear-gradient(90deg, #78b6e8 80%, #507a9c 80%); }
.apps .active::after { left: 0; right: 0; }
.large .run::after { height: 3px; }
.tray { margin-left: auto; display: flex; align-items: center; }
.clock { display: flex; flex-direction: column; align-items: center; }
.small .tray { gap: 3px; padding-right: 18px; }
.small .tray .chev { width: 11px; height: 11px; margin-right: 4px; }
.small .tray svg { width: 15px; height: 15px; }
.small .clock { width: 52px; }
.small .tray .note { margin-left: 4px; }
.large .tray { padding-right: 8px; }

/* browser */
.tabstrip { display: flex; height: 43px; flex: none; background: #20233f; border-bottom: 1px solid #0e0e20; color: #c6c8d2; font-size: 15px; }
.tabs { flex: 1; display: grid; grid-template-columns: repeat(14, minmax(0, 1fr)); }
.tab { display: flex; align-items: center; gap: 8px; padding: 2px 16px 0 14px; border-right: 1px solid #55576f; min-width: 0; }
.tab > svg { width: 21px; height: 21px; }
.tab span { flex: 1; min-width: 0; overflow: hidden; white-space: nowrap; color: #b4b6c2; mask-image: linear-gradient(90deg, #000 calc(100% - 28px), transparent); }
.tab button svg { width: 13px; height: 13px; }
.tab .mute { width: 18px; height: 18px; }
.tab.current { background: #f9f9fb; color: #444; border-top: 3px solid #0a84ff; margin-bottom: -1px; padding-top: 0; border-right: 0; }
.tab.current span { color: #3a3a42; }
.newtab { width: 42px; }
.newtab svg { width: 18px; height: 18px; }
.tabstrip .winbtns { margin-left: 55px; color: #8e90a0; }
.tabstrip .winbtns button { width: 51px; }
.tabstrip .winbtns svg { width: 14px; height: 14px; }
.navbar { display: flex; align-items: center; height: 53px; flex: none; background: #f9f9fb; color: #4c4c50; padding-left: 5px; }
.back { width: 44px; height: 44px; border: 1px solid #b8b8bb; border-radius: 50%; background: #fff; }
.navbar button svg { width: 21px; height: 21px; }
.nav { width: 41px; height: 44px; }
.dim { color: #b6b6ba; }
.urlbar { flex: 1; display: flex; align-items: center; gap: 17px; height: 39px; margin-left: 157px; padding: 0 8px; border: 1px solid #b8b8bb; border-radius: 3px; background: #fff; color: #5c5c60; }
.urlbar svg { width: 20px; height: 20px; }
.urlbar i { width: 1px; height: 28px; margin: 0 -8px; background: #e0e0e2; }
.urlbar input { flex: 1; min-width: 0; height: 32px; margin-left: -6px; font-size: 17px; color: transparent; outline: 0; background: linear-gradient(90deg, #808084 58px, #0c0c0d 58px, #0c0c0d 208px, #808084 208px); background-clip: text; -webkit-background-clip: text; }
.extras { display: flex; margin-left: 154px; padding-right: 4px; border-right: 1px solid #dcdcde; }
.extras button { width: 42px; height: 44px; }
.burger { width: 54px; height: 44px; }
.bookmarks { display: flex; align-items: center; gap: 18px; height: 30px; flex: none; padding: 0 0 2px 16px; background: #f9f9fb; border-bottom: 1px solid #d6d8da; font-size: 14px; color: #0c0c0d; }
.bookmarks a { display: flex; align-items: center; gap: 7px; white-space: nowrap; }
.bookmarks .wide { width: 193px; }
.bookmarks svg { width: 21px; height: 21px; }
.bookmarks i { width: 1px; height: 22px; background: #aaa; margin: 0 -4px; }
.bookmarks button { margin: 0 16px 0 auto; color: #4c4c50; }

.page { flex: 1; display: flex; min-height: 0; overflow: hidden; }
.article { width: 1230px; margin: 0 auto; padding-top: 16px; display: flex; flex-direction: column; gap: 20px; font-size: 25px; line-height: 39px; }
.article > * { flex: none; }
.article h1 { margin: 0; font-size: 48px; line-height: 74px; font-weight: 400; }
.article p { margin: 0; white-space: nowrap; }
.article p a { color: #2a7ae2; }
.scroll { width: 24px; display: flex; flex-direction: column; align-items: center; background: #f0f0f0; border-left: 1px solid #b4b6b8; padding: 6px 0; color: #555; }
.scroll svg { width: 12px; height: 12px; }
.scroll .flip { transform: rotate(180deg); margin-top: auto; }
.scroll span { width: 100%; height: 131px; margin-top: 83px; background: #cdcdcd; }

/* process settings dialog */
.fff { border-radius: 24px 24px 0 0; overflow: hidden; background: #f0f0f0; font-size: 13px; line-height: 18px; color: #1c1c1c; }
.fff header { display: flex; align-items: center; height: 34px; padding: 0 20px 3px 5px; gap: 6px; background: #fff; font-size: 14px; }
.fff header svg { width: 20px; height: 20px; }
.fff header span { flex: 1; }
.fff header button { width: 18px; }
.fff header button svg { width: 14px; height: 14px; }
.fff header .help { margin-right: 38px; }
.fields { display: flex; flex-direction: column; padding: 15px 14px 0 8px; gap: 8px; }
.row { display: flex; align-items: center; gap: 10px; height: 25px; }
.row label { width: 105px; white-space: nowrap; }
.row input { flex: 1; height: 25px; border: 1px solid #2a7ea8; outline: 0; background: #fff; padding-left: 2px; }
.fff select { appearance: none; flex: 1; min-width: 0; height: 24px; border: 1px solid #adadad; padding-left: 4px; background: conic-gradient(from -40deg at 50% 100%, #111 80deg, transparent 0) no-repeat right 7px center / 10px 6px, #e1e1e1; }
.row button { height: 26px; border: 1px solid #adadad; background: #e1e1e1; }
.b1 { width: 133px; } .b2 { width: 184px; } .b3 { width: 92px; }
.groups { display: grid; grid-template-columns: 397fr 398fr 396fr; gap: 8px; margin-left: 1px; }
.fff fieldset { display: flex; align-items: center; gap: 9px; margin: 0; min-width: 0; border: 1px solid #dcdcdc; padding: 12px 12px 12px 11px; }
.fff legend { margin-left: -4px; line-height: 18px; }
.sq { width: 26px; height: 24px; border: 1px solid #adadad; background: radial-gradient(circle closest-side, var(--c) 80%, #e1e1e1 85%); color: #fff; font-size: 16px; font-weight: 700; }
.add { --c: #3fa755; } .del { --c: #d0282e; }
.fff .general { margin-left: 1px; padding: 11px 16px 30px 10px; }
.general label { white-space: nowrap; }
#fill { appearance: none; flex: 1; min-width: 0; height: 30px; margin-left: 12px; }
#fill::-webkit-slider-runnable-track { height: 5px; background: #e4e4e4; border: 1px solid #d0d0d0; }
#fill::-webkit-slider-thumb { appearance: none; width: 13px; height: 26px; margin-top: -12px; background: #0078d7; }
.general output { width: 52px; }
.chk { display: flex; align-items: center; gap: 7px; }
.chk + .chk { margin-left: 30px; }
.chk input[type="checkbox"] { width: 16px; height: 16px; }
.chk input[type="checkbox"]:checked::after { width: 5px; height: 10px; }
```
FILE: scene.js
```js
// Draws the print bed of each viewport: a 10 x 10 grid seen in perspective.
const NS = "http://www.w3.org/2000/svg";

function projector([[x0, y0], [x1, y1], [x2, y2], [x3, y3]]) {
  const dx1 = x1 - x2, dx2 = x3 - x2, sx = x0 - x1 + x2 - x3;
  const dy1 = y1 - y2, dy2 = y3 - y2, sy = y0 - y1 + y2 - y3;
  const den = dx1 * dy2 - dx2 * dy1;
  const g = (sx * dy2 - dx2 * sy) / den;
  const h = (dx1 * sy - sx * dy1) / den;
  return (u, v) => {
    const w = g * u + h * v + 1;
    const x = ((x1 - x0 + g * x1) * u + (x3 - x0 + h * x3) * v + x0) / w;
    const y = ((y1 - y0 + g * y1) * u + (y3 - y0 + h * y3) * v + y0) / w;
    return x.toFixed(1) + " " + y.toFixed(1);
  };
}

function addPath(parent, name, d) {
  const path = document.createElementNS(NS, "path");
  path.setAttribute("class", name);
  path.setAttribute("d", d);
  parent.append(path);
}

for (const bed of document.querySelectorAll(".plate")) {
  const corners = bed.dataset.corners.split(" ").map(p => p.split(",").map(Number));
  const at = projector(corners);
  const lo = 0.012, hi = 0.988;
  let minor = "", major = "";
  for (let i = 0; i <= 50; i++) {
    const t = lo + (hi - lo) * i / 50;
    const d = `M${at(t, lo)}L${at(t, hi)}M${at(lo, t)}L${at(hi, t)}`;
    if (i % 5) minor += d; else major += d;
  }
  addPath(bed, "bed", `M${at(0, 0)}L${at(1, 0)}L${at(1, 1)}L${at(0, 1)}Z`);
  addPath(bed, "minor", minor);
  addPath(bed, "major", major);
}

// Keep the caret at the end of the process name.
const nameField = document.getElementById("pname");
nameField.setSelectionRange(nameField.value.length, nameField.value.length);
```
